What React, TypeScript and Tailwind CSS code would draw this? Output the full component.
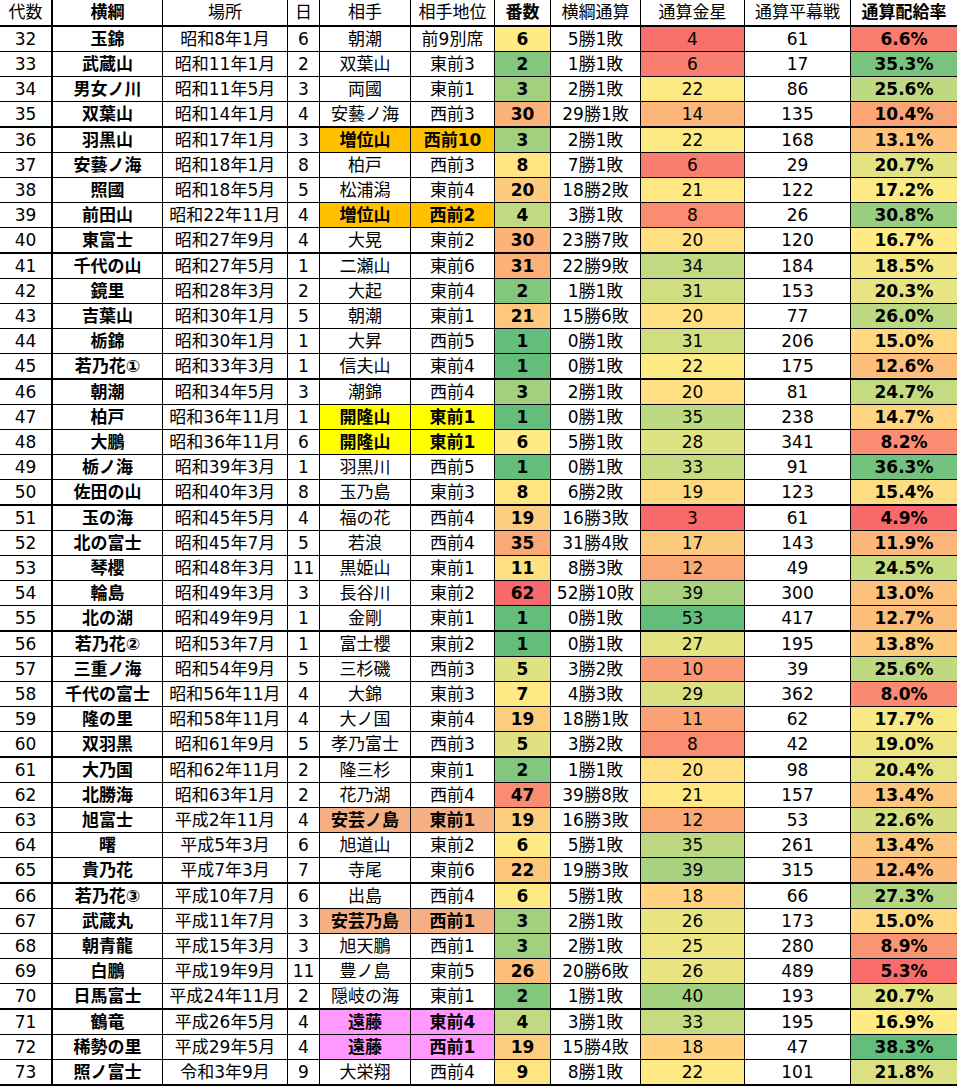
import React from 'react';

type Row = {
  no: number;
  name: string;
  basho: string;
  day: number;
  opp: string;
  rank: string;
  bouts: number;
  record: string;
  kinboshi: number;
  hiramaku: number;
  rate: number;
  mark?: string;
};

// highlight fills for the opponent cells
const ORANGE = 'bg-[#ffc000]';
const YELLOW = 'bg-[#ffff00]';
const SALMON = 'bg-[#f4b084]';
const PINK = 'bg-[#ff99ff]';

const rows: Row[] = [
  { no: 32, name: '玉錦', basho: '昭和8年1月', day: 6, opp: '朝潮', rank: '前9別席', bouts: 6, record: '5勝1敗', kinboshi: 4, hiramaku: 61, rate: 6.6 },
  { no: 33, name: '武蔵山', basho: '昭和11年1月', day: 2, opp: '双葉山', rank: '東前3', bouts: 2, record: '1勝1敗', kinboshi: 6, hiramaku: 17, rate: 35.3 },
  { no: 34, name: '男女ノ川', basho: '昭和11年5月', day: 3, opp: '両國', rank: '東前1', bouts: 3, record: '2勝1敗', kinboshi: 22, hiramaku: 86, rate: 25.6 },
  { no: 35, name: '双葉山', basho: '昭和14年1月', day: 4, opp: '安藝ノ海', rank: '西前3', bouts: 30, record: '29勝1敗', kinboshi: 14, hiramaku: 135, rate: 10.4 },
  { no: 36, name: '羽黒山', basho: '昭和17年1月', day: 3, opp: '増位山', rank: '西前10', bouts: 3, record: '2勝1敗', kinboshi: 22, hiramaku: 168, rate: 13.1, mark: ORANGE },
  { no: 37, name: '安藝ノ海', basho: '昭和18年1月', day: 8, opp: '柏戸', rank: '西前3', bouts: 8, record: '7勝1敗', kinboshi: 6, hiramaku: 29, rate: 20.7 },
  { no: 38, name: '照國', basho: '昭和18年5月', day: 5, opp: '松浦潟', rank: '東前4', bouts: 20, record: '18勝2敗', kinboshi: 21, hiramaku: 122, rate: 17.2 },
  { no: 39, name: '前田山', basho: '昭和22年11月', day: 4, opp: '増位山', rank: '西前2', bouts: 4, record: '3勝1敗', kinboshi: 8, hiramaku: 26, rate: 30.8, mark: ORANGE },
  { no: 40, name: '東富士', basho: '昭和27年9月', day: 4, opp: '大晃', rank: '東前2', bouts: 30, record: '23勝7敗', kinboshi: 20, hiramaku: 120, rate: 16.7 },
  { no: 41, name: '千代の山', basho: '昭和27年5月', day: 1, opp: '二瀬山', rank: '東前6', bouts: 31, record: '22勝9敗', kinboshi: 34, hiramaku: 184, rate: 18.5 },
  { no: 42, name: '鏡里', basho: '昭和28年3月', day: 2, opp: '大起', rank: '東前4', bouts: 2, record: '1勝1敗', kinboshi: 31, hiramaku: 153, rate: 20.3 },
  { no: 43, name: '吉葉山', basho: '昭和30年1月', day: 5, opp: '朝潮', rank: '東前1', bouts: 21, record: '15勝6敗', kinboshi: 20, hiramaku: 77, rate: 26.0 },
  { no: 44, name: '栃錦', basho: '昭和30年1月', day: 1, opp: '大昇', rank: '西前5', bouts: 1, record: '0勝1敗', kinboshi: 31, hiramaku: 206, rate: 15.0 },
  { no: 45, name: '若乃花①', basho: '昭和33年3月', day: 1, opp: '信夫山', rank: '東前4', bouts: 1, record: '0勝1敗', kinboshi: 22, hiramaku: 175, rate: 12.6 },
  { no: 46, name: '朝潮', basho: '昭和34年5月', day: 3, opp: '潮錦', rank: '西前4', bouts: 3, record: '2勝1敗', kinboshi: 20, hiramaku: 81, rate: 24.7 },
  { no: 47, name: '柏戸', basho: '昭和36年11月', day: 1, opp: '開隆山', rank: '東前1', bouts: 1, record: '0勝1敗', kinboshi: 35, hiramaku: 238, rate: 14.7, mark: YELLOW },
  { no: 48, name: '大鵬', basho: '昭和36年11月', day: 6, opp: '開隆山', rank: '東前1', bouts: 6, record: '5勝1敗', kinboshi: 28, hiramaku: 341, rate: 8.2, mark: YELLOW },
  { no: 49, name: '栃ノ海', basho: '昭和39年3月', day: 1, opp: '羽黒川', rank: '西前5', bouts: 1, record: '0勝1敗', kinboshi: 33, hiramaku: 91, rate: 36.3 },
  { no: 50, name: '佐田の山', basho: '昭和40年3月', day: 8, opp: '玉乃島', rank: '東前3', bouts: 8, record: '6勝2敗', kinboshi: 19, hiramaku: 123, rate: 15.4 },
  { no: 51, name: '玉の海', basho: '昭和45年5月', day: 4, opp: '福の花', rank: '西前4', bouts: 19, record: '16勝3敗', kinboshi: 3, hiramaku: 61, rate: 4.9 },
  { no: 52, name: '北の富士', basho: '昭和45年7月', day: 5, opp: '若浪', rank: '西前4', bouts: 35, record: '31勝4敗', kinboshi: 17, hiramaku: 143, rate: 11.9 },
  { no: 53, name: '琴櫻', basho: '昭和48年3月', day: 11, opp: '黒姫山', rank: '東前1', bouts: 11, record: '8勝3敗', kinboshi: 12, hiramaku: 49, rate: 24.5 },
  { no: 54, name: '輪島', basho: '昭和49年3月', day: 3, opp: '長谷川', rank: '東前2', bouts: 62, record: '52勝10敗', kinboshi: 39, hiramaku: 300, rate: 13.0 },
  { no: 55, name: '北の湖', basho: '昭和49年9月', day: 1, opp: '金剛', rank: '東前1', bouts: 1, record: '0勝1敗', kinboshi: 53, hiramaku: 417, rate: 12.7 },
  { no: 56, name: '若乃花②', basho: '昭和53年7月', day: 1, opp: '富士櫻', rank: '東前2', bouts: 1, record: '0勝1敗', kinboshi: 27, hiramaku: 195, rate: 13.8 },
  { no: 57, name: '三重ノ海', basho: '昭和54年9月', day: 5, opp: '三杉磯', rank: '西前3', bouts: 5, record: '3勝2敗', kinboshi: 10, hiramaku: 39, rate: 25.6 },
  { no: 58, name: '千代の富士', basho: '昭和56年11月', day: 4, opp: '大錦', rank: '東前3', bouts: 7, record: '4勝3敗', kinboshi: 29, hiramaku: 362, rate: 8.0 },
  { no: 59, name: '隆の里', basho: '昭和58年11月', day: 4, opp: '大ノ国', rank: '東前4', bouts: 19, record: '18勝1敗', kinboshi: 11, hiramaku: 62, rate: 17.7 },
  { no: 60, name: '双羽黒', basho: '昭和61年9月', day: 5, opp: '孝乃富士', rank: '西前3', bouts: 5, record: '3勝2敗', kinboshi: 8, hiramaku: 42, rate: 19.0 },
  { no: 61, name: '大乃国', basho: '昭和62年11月', day: 2, opp: '隆三杉', rank: '東前1', bouts: 2, record: '1勝1敗', kinboshi: 20, hiramaku: 98, rate: 20.4 },
  { no: 62, name: '北勝海', basho: '昭和63年1月', day: 2, opp: '花乃湖', rank: '西前4', bouts: 47, record: '39勝8敗', kinboshi: 21, hiramaku: 157, rate: 13.4 },
  { no: 63, name: '旭富士', basho: '平成2年11月', day: 4, opp: '安芸ノ島', rank: '東前1', bouts: 19, record: '16勝3敗', kinboshi: 12, hiramaku: 53, rate: 22.6, mark: SALMON },
  { no: 64, name: '曙', basho: '平成5年3月', day: 6, opp: '旭道山', rank: '東前2', bouts: 6, record: '5勝1敗', kinboshi: 35, hiramaku: 261, rate: 13.4 },
  { no: 65, name: '貴乃花', basho: '平成7年3月', day: 7, opp: '寺尾', rank: '東前6', bouts: 22, record: '19勝3敗', kinboshi: 39, hiramaku: 315, rate: 12.4 },
  { no: 66, name: '若乃花③', basho: '平成10年7月', day: 6, opp: '出島', rank: '西前4', bouts: 6, record: '5勝1敗', kinboshi: 18, hiramaku: 66, rate: 27.3 },
  { no: 67, name: '武蔵丸', basho: '平成11年7月', day: 3, opp: '安芸乃島', rank: '西前1', bouts: 3, record: '2勝1敗', kinboshi: 26, hiramaku: 173, rate: 15.0, mark: SALMON },
  { no: 68, name: '朝青龍', basho: '平成15年3月', day: 3, opp: '旭天鵬', rank: '西前1', bouts: 3, record: '2勝1敗', kinboshi: 25, hiramaku: 280, rate: 8.9 },
  { no: 69, name: '白鵬', basho: '平成19年9月', day: 11, opp: '豊ノ島', rank: '東前5', bouts: 26, record: '20勝6敗', kinboshi: 26, hiramaku: 489, rate: 5.3 },
  { no: 70, name: '日馬富士', basho: '平成24年11月', day: 2, opp: '隠岐の海', rank: '東前1', bouts: 2, record: '1勝1敗', kinboshi: 40, hiramaku: 193, rate: 20.7 },
  { no: 71, name: '鶴竜', basho: '平成26年5月', day: 4, opp: '遠藤', rank: '東前4', bouts: 4, record: '3勝1敗', kinboshi: 33, hiramaku: 195, rate: 16.9, mark: PINK },
  { no: 72, name: '稀勢の里', basho: '平成29年5月', day: 4, opp: '遠藤', rank: '西前1', bouts: 19, record: '15勝4敗', kinboshi: 18, hiramaku: 47, rate: 38.3, mark: PINK },
  { no: 73, name: '照ノ富士', basho: '令和3年9月', day: 9, opp: '大栄翔', rank: '西前4', bouts: 9, record: '8勝1敗', kinboshi: 22, hiramaku: 101, rate: 21.8 },
];

// Excel-style 3 colour scale (min / 50th percentile / max)
type RGB = [number, number, number];
const RED: RGB = [248, 105, 107];
const MID: RGB = [255, 235, 132];
const GREEN: RGB = [99, 190, 123];

function percentile(values: number[], p: number) {
  const s = [...values].sort((a, b) => a - b);
  const pos = p * (s.length - 1);
  const lo = Math.floor(pos);
  const hi = Math.ceil(pos);
  return s[lo] + (s[hi] - s[lo]) * (pos - lo);
}

function mix(a: RGB, b: RGB, t: number) {
  const c = a.map((v, i) => Math.round(v + (b[i] - v) * t));
  return `rgb(${c[0]}, ${c[1]}, ${c[2]})`;
}

function makeScale(values: number[], lowColor: RGB, highColor: RGB) {
  const min = Math.min(...values);
  const max = Math.max(...values);
  const mid = percentile(values, 0.5);
  return (v: number) => {
    if (v <= mid) return mix(lowColor, MID, mid === min ? 1 : (v - min) / (mid - min));
    return mix(MID, highColor, max === mid ? 0 : (v - mid) / (max - mid));
  };
}

const boutsColor = makeScale(rows.map((r) => r.bouts), GREEN, RED);
const kinboshiColor = makeScale(rows.map((r) => r.kinboshi), RED, GREEN);
const rateColor = makeScale(rows.map((r) => r.rate), RED, GREEN);

const thickAfter = [35, 40, 45, 50, 55, 60, 65, 70, 73];

const cell = 'flex items-center justify-center h-full whitespace-nowrap';

export default function App() {
  return (
    <div className="w-[957px] h-[1086px] overflow-hidden bg-white text-black text-[17px] leading-none font-['DejaVu_Sans','Noto_Sans_CJK_JP',sans-serif]">
      <div className="flex h-[27px] border-b-2 border-black">
        <div className={`${cell} w-[53px] border-r-2 border-black`}>代数</div>
        <div className={`${cell} w-[110px] border-r border-black font-bold`}>横綱</div>
        <div className={`${cell} w-[125px] border-r border-black`}>場所</div>
        <div className={`${cell} w-[32px] border-r border-black`}>日</div>
        <div className={`${cell} w-[91px] border-r border-black`}>相手</div>
        <div className={`${cell} w-[84px] border-r border-black`}>相手地位</div>
        <div className={`${cell} w-[56px] border-r border-black font-bold`}>番数</div>
        <div className={`${cell} w-[90px] border-r border-black`}>横綱通算</div>
        <div className={`${cell} w-[104px] border-r border-black`}>通算金星</div>
        <div className={`${cell} w-[106px] border-r border-black`}>通算平幕戦</div>
        <div className={`${cell} w-[106px] font-bold`}>通算配給率</div>
      </div>
      {rows.map((r) => {
        const thick = thickAfter.includes(r.no);
        return (
          <div
            key={r.no}
            className={thick ? 'flex h-[26px] border-b-2 border-black' : 'flex h-[25px] border-b border-black'}
          >
            <div className={`${cell} w-[53px] border-r-2 border-black`}>{r.no}</div>
            <div className={`${cell} w-[110px] border-r border-black font-bold`}>{r.name}</div>
            <div className={`${cell} w-[125px] border-r border-black`}>{r.basho}</div>
            <div className={`${cell} w-[32px] border-r border-black`}>{r.day}</div>
            <div className={`${cell} w-[91px] border-r border-black ${r.mark ? r.mark + ' font-bold' : ''}`}>{r.opp}</div>
            <div className={`${cell} w-[84px] border-r border-black ${r.mark ? r.mark + ' font-bold' : ''}`}>{r.rank}</div>
            <div className={`${cell} w-[56px] border-r border-black font-bold`} style={{ backgroundColor: boutsColor(r.bouts) }}>
              {r.bouts}
            </div>
            <div className={`${cell} w-[90px] border-r border-black`}>{r.record}</div>
            <div className={`${cell} w-[104px] border-r border-black`} style={{ backgroundColor: kinboshiColor(r.kinboshi) }}>
              {r.kinboshi}
            </div>
            <div className={`${cell} w-[106px] border-r border-black`}>{r.hiramaku}</div>
            <div className={`${cell} w-[106px] font-bold`} style={{ backgroundColor: rateColor(r.rate) }}>
              {r.rate.toFixed(1)}%
            </div>
          </div>
        );
      })}
    </div>
  );
}
